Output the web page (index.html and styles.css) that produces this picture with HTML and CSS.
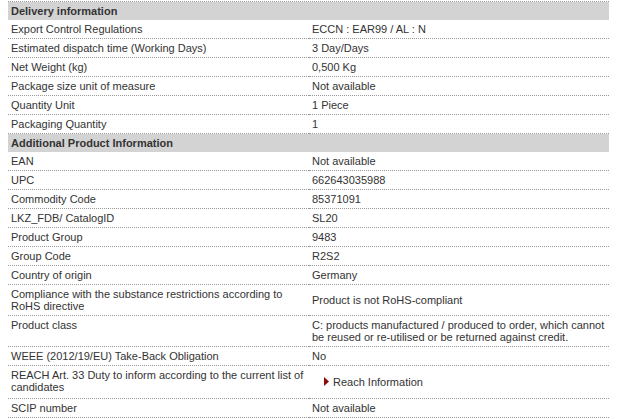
FILE: index.html
```html
<!DOCTYPE html>
<html>
<head>
<meta charset="utf-8">
<link rel="stylesheet" href="styles.css">
</head>
<body>
<div class="spec">
<table class="spec-table">
<colgroup><col class="col-label"><col class="col-value"></colgroup>
<tbody>
<tr class="head"><th colspan="2">Delivery information</th></tr>
<tr><td class="label">Export Control Regulations</td><td class="value">ECCN : EAR99 / AL : N</td></tr>
<tr><td class="label">Estimated dispatch time (Working Days)</td><td class="value">3 Day/Days</td></tr>
<tr><td class="label">Net Weight (kg)</td><td class="value">0,500 Kg</td></tr>
<tr><td class="label">Package size unit of measure</td><td class="value">Not available</td></tr>
<tr><td class="label">Quantity Unit</td><td class="value">1 Piece</td></tr>
<tr><td class="label">Packaging Quantity</td><td class="value">1</td></tr>
<tr class="head"><th colspan="2">Additional Product Information</th></tr>
<tr><td class="label">EAN</td><td class="value">Not available</td></tr>
<tr><td class="label">UPC</td><td class="value">662643035988</td></tr>
<tr><td class="label">Commodity Code</td><td class="value">85371091</td></tr>
<tr><td class="label">LKZ_FDB/ CatalogID</td><td class="value">SL20</td></tr>
<tr><td class="label">Product Group</td><td class="value">9483</td></tr>
<tr><td class="label">Group Code</td><td class="value">R2S2</td></tr>
<tr><td class="label">Country of origin</td><td class="value">Germany</td></tr>
<tr><td class="label">Compliance with the substance restrictions according to RoHS directive</td><td class="value">Product is not RoHS-compliant</td></tr>
<tr><td class="label">Product class</td><td class="value">C: products manufactured / produced to order, which cannot be reused or re-utilised or be returned against credit.</td></tr>
<tr><td class="label">WEEE (2012/19/EU) Take-Back Obligation</td><td class="value">No</td></tr>
<tr><td class="label">REACH Art. 33 Duty to inform according to the current list of candidates</td><td class="value"><a class="reach-link" href="#"><svg class="arrow" width="5" height="9" viewBox="0 0 5 9"><path d="M0 0L5 4.5L0 9Z" fill="#8b0a0a"/></svg>Reach Information</a></td></tr>
<tr><td class="label">SCIP number</td><td class="value">Not available</td></tr>
</tbody>
</table>
</div>
</body>
</html>
```
FILE: styles.css
```css
html, body {
  margin: 0;
  padding: 0;
  background: #fff;
}
.spec {
  padding: 1px 8px 0 8px;
  font-family: "Liberation Sans", Arial, sans-serif;
  font-size: 11px;
  line-height: 12px;
  color: #333;
}
.spec-table {
  width: 601px;
  border-collapse: separate;
  border-spacing: 0;
  border-top: 1px dotted #999;
  table-layout: fixed;
}
.col-label { width: 301px; }
.col-value { width: 300px; }
.head th {
  background: #d3d3d3;
  text-align: left;
  font-weight: bold;
  padding: 3px 3px;
  color: #333;
}
.spec-table td {
  padding: 3px 3px;
  border-bottom: 1px dotted #999;
}
.label {
  vertical-align: top;
}
.value {
  vertical-align: middle;
}
.reach-link {
  display: inline-block;
  position: relative;
  padding: 7px 0 7px 21px;
  color: #333;
  text-decoration: none;
}
.arrow {
  position: absolute;
  left: 12px;
  top: 8px;
}
```
